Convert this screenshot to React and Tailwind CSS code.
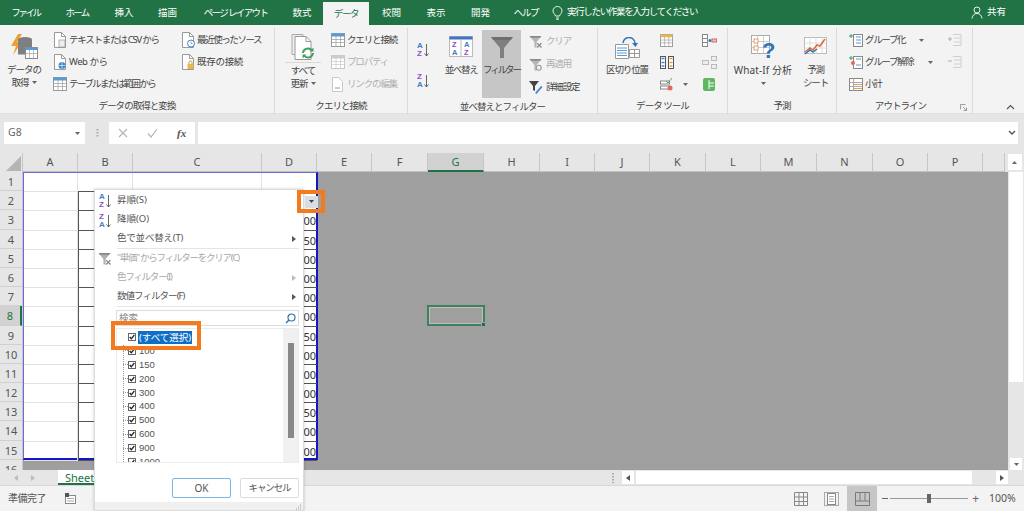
import React from "react";

const Doc = ({ children }) => (
  <svg width="14" height="16" viewBox="0 0 14 16" className="shrink-0">
    <path d="M1.5 .5h7l4 4v11h-11z" fill="#fff" stroke="#9a9a9a" />
    <path d="M8.5 .5v4h4" fill="none" stroke="#9a9a9a" />
    {children}
  </svg>
);
const TableIco = ({ w = 14, h = 14, top = "#5b9bd5", line = "#9a9a9a" }) => (
  <svg width={w} height={h} viewBox="0 0 14 14" className="shrink-0">
    <rect x=".5" y=".5" width="13" height="13" fill="#fff" stroke={line} />
    <rect x=".5" y=".5" width="13" height="3" fill={top} />
    <path d="M.5 6.5h13M.5 9.5h13M5 3v11M9.5 3v11" stroke={line} strokeWidth=".7" />
  </svg>
);
const SortIco = ({ a = "A", b = "Z", c1 = "#3f7fc4", c2 = "#8a4fbf" }) => (
  <svg width="12" height="18" viewBox="0 0 12 18" className="shrink-0">
    <text x="0" y="8" fontSize="8" fontWeight="700" fontFamily="Liberation Sans" fill={c1}>{a}</text>
    <text x="0" y="16" fontSize="8" fontWeight="700" fontFamily="Liberation Sans" fill={c2}>{b}</text>
    <path d="M9.5 4v12M7.5 13.500l2 2.500 2-2.500" fill="none" stroke="#555" strokeWidth=".9" />
  </svg>
);
const Funnel = ({ w = 14, h = 14, fill = "#7f7f7f", extra }) => (
  <svg width={w} height={h} viewBox="0 0 24 24" className="shrink-0">
    <path d="M1 2h22L14 13v10h-4V13z" fill={fill} />
    <path d="M1 2h22l-2 3H3z" fill="#606060" opacity=".5" />
    {extra}
  </svg>
);
const Caret = ({ c = "#666" }) => (
  <svg width="5" height="3" viewBox="0 0 5 3" className="shrink-0"><path d="M0 0h5L2.5 3z" fill={c} /></svg>
);
const ArrowR = ({ c = "#555" }) => (
  <svg width="4" height="6" viewBox="0 0 4 6"><path d="M0 0l4 3-4 3z" fill={c} /></svg>
);
const Chk = () => (
  <span className="w-[8px] h-[8px] border border-[#666] bg-white flex items-center justify-center shrink-0">
    <svg width="6" height="6" viewBox="0 0 6 6"><path d="M.7 3l1.600 1.800L5.300 1" fill="none" stroke="#222" strokeWidth="1.300" /></svg>
  </span>
);
const Small = ({ icon, children, cls = "" }) => (
  <div className={"h-[22px] flex items-center gap-[2px] whitespace-nowrap " + cls}>
    <span className="w-[15px] flex justify-center shrink-0">{icon}</span>
    <span>{children}</span>
  </div>
);
const Group = ({ cls, label, children }) => (
  <div className={"flex flex-col shrink-0 border-r border-[#dadada] my-[3px] -mb-[1px] " + cls}>
    <div className="h-[70px] flex">{children}</div>
    <div className="h-[17px] leading-[18px] text-center tracking-[-0.1em]">{label}</div>
  </div>
);

const tabs = [
  ["ファイル", "w-[51px]", "tracking-[-0.25em]"],
  ["ホーム", "w-[52px]", "tracking-[-0.18em]"],
  ["挿入", "w-[42px]", ""],
  ["描画", "w-[45px]", ""],
  ["ページ レイアウト", "w-[91px]", "tracking-[-0.17em]"],
  ["数式", "w-[42px]", ""],
];
const tabs2 = [
  ["校閲", "w-[45px]"],
  ["表示", "w-[44px]"],
  ["開発", "w-[45px]"],
  ["ヘルプ", "w-[46px] tracking-[-0.14em]"],
];
const cols = [
  ["A", "w-[55px]"], ["B", "w-[55px]"], ["C", "w-[129px]"], ["D", "w-[55px]"], ["E", "w-[55px]"], ["F", "w-[56px]"],
  ["G", "w-[56px]"], ["H", "w-[56px]"], ["I", "w-[55px]"], ["J", "w-[55px]"], ["K", "w-[56px]"], ["L", "w-[55px]"],
  ["M", "w-[56px]"], ["N", "w-[56px]"], ["O", "w-[55px]"], ["P", "w-[55px]"], ["", "w-[22px]"],
];
const rows = Array.from({ length: 16 }, (_, i) => i + 1);
const dvals = ["", "", "00", "50", "00", "00", "00", "00", "50", "00", "00", "00", "50", "00", "00"];
const items = ["100", "150", "200", "300", "400", "500", "600", "900", "1000"];

export default function App() {
  return (
    <div className="relative w-[1024px] h-[511px] overflow-hidden flex flex-col bg-[#f3f3f3] text-[#444] text-[9.5px] font-['Noto_Sans','Noto_Sans_CJK_JP',sans-serif]">
      {/* title tabs */}
      <div className="h-[25px] shrink-0 bg-[#217346] flex text-white items-end">
        {tabs.map(([t, w, tr]) => (
          <div key={t} className={"h-[25px] leading-[25px] text-center whitespace-nowrap " + w + " " + tr}>{t}</div>
        ))}
        <div className="w-[46px] h-[23px] leading-[23px] text-center bg-[#f3f3f3] text-[#217346] tracking-[-0.14em]">データ</div>
        {tabs2.map(([t, w]) => (
          <div key={t} className={"h-[25px] leading-[25px] text-center " + w}>{t}</div>
        ))}
        <div className="h-[25px] flex items-center ml-[3px] gap-[4px] tracking-[-0.14em] whitespace-nowrap">
          <svg width="11" height="14" viewBox="0 0 11 14"><path d="M3.500 10C3 8 1 7.200 1 5a4.500 4.500 0 019 0c0 2.200-2 3-2.500 5zM4 12h3M4.500 13.500h2" fill="none" stroke="#fff" strokeWidth=".9" /></svg>
          <span>実行したい作業を入力してください</span>
        </div>
        <div className="ml-auto mr-[18px] h-[25px] flex items-center gap-[4px]">
          <svg width="12" height="13" viewBox="0 0 12 13"><circle cx="6" cy="4" r="3" fill="none" stroke="#fff" strokeWidth=".9" /><path d="M1 12.500c.5-3.500 2.500-5 5-5s4.500 1.500 5 5" fill="none" stroke="#fff" strokeWidth=".9" /></svg>
          <span>共有</span>
        </div>
      </div>

      {/* ribbon */}
      <div className="h-[89px] shrink-0 flex bg-[#f3f3f3] border-b border-[#e0e0e0]">
        <Group cls="w-[275px]" label="データの取得と変換">
          <div className="w-[46px] ml-[1px] pt-[5px] flex flex-col items-center leading-[13px] tracking-[-0.1em]">
            <svg width="28" height="28" viewBox="0 0 28 28" className="mb-[2px]">
              <path d="M8 1L1 13h5l-3 9 9-13H7l5-8z" fill="#f0a030" />
              <ellipse cx="15" cy="6.500" rx="7" ry="2.500" fill="#7f7f7f" />
              <path d="M8 6.500v15h14v-15" fill="#7f7f7f" />
              <rect x="15.500" y="14.500" width="12" height="11" fill="#fff" stroke="#8a8a8a" />
              <rect x="15.500" y="14.500" width="12" height="2.500" fill="#5b9bd5" />
              <path d="M15.500 20.500h12M19.500 17v8M23.500 17v8" stroke="#a0a0a0" strokeWidth=".7" />
            </svg>
            <span>データの</span>
            <span className="flex items-center gap-[3px]">取得<Caret /></span>
          </div>
          <div className="w-[128px] ml-[5px] pt-[1px] flex flex-col tracking-[-0.13em]">
            <Small icon={<Doc><rect x="6" y="8" width="6" height="7" fill="#eee" stroke="#999" strokeWidth=".7" /></Doc>}>テキストまたは CSV から</Small>
            <Small icon={<Doc><circle cx="9" cy="11.500" r="3.500" fill="#3f86cf" /><path d="M5.500 11.500h7M9 8v7" stroke="#fff" strokeWidth=".6" /></Doc>}><span className="tracking-[-0.05em]">Web から</span></Small>
            <Small icon={<TableIco />}><span className="tracking-[-0.17em]">テーブルまたは範囲から</span></Small>
          </div>
          <div className="flex-1 pt-[1px] flex flex-col tracking-[-0.15em]">
            <Small icon={<Doc><circle cx="10" cy="11.500" r="3.500" fill="#fff" stroke="#3f86cf" /><path d="M10 9.500v2h1.500" fill="none" stroke="#3f86cf" strokeWidth=".7" /></Doc>}>最近使ったソース</Small>
            <Small icon={<Doc><rect x="6.500" y="10" width="6" height="5" fill="#e8b94a" /><path d="M8 10V8.500a1.500 1.500 0 013 0V10" fill="none" stroke="#c09a30" /></Doc>}><span className="tracking-[-0.03em]">既存の接続</span></Small>
          </div>
        </Group>

        <Group cls="w-[133px]" label="クエリと接続">
          <div className="w-[50px] ml-[3px] pt-[5px] flex flex-col items-center leading-[13px] tracking-[-0.1em]">
            <svg width="28" height="28" viewBox="0 0 28 28">
              <path d="M3 1.500h11v20H3z" fill="#eee" stroke="#aaa" />
              <path d="M6 3.500h11l5 5v18H6z" fill="#fff" stroke="#999" />
              <path d="M17 3.500v5h5" fill="none" stroke="#999" />
              <path d="M14 20a5 5 0 019-2.500M24 20a5 5 0 01-9 2.500" fill="none" stroke="#3f9f5f" strokeWidth="2" />
              <path d="M24.500 14.500v4h-4zM13.500 25.500v-4h4z" fill="#3f9f5f" />
            </svg>
            <span className="h-px w-[36px] bg-[#d8d8d8] my-[1px]" />
            <span>すべて</span>
            <span className="flex items-center gap-[3px]">更新<Caret /></span>
          </div>
          <div className="flex-1 pl-[2px] pt-[1px] flex flex-col tracking-[-0.12em]">
            <Small icon={<TableIco />}>クエリと接続</Small>
            <Small cls="text-[#b0b0b0]" icon={<TableIco top="#ccc" line="#c8c8c8" />}>プロパティ</Small>
            <Small cls="text-[#b0b0b0]" icon={<svg width="13" height="15" viewBox="0 0 13 15"><path d="M1.500.5h6l4 4v10h-10z" fill="#fff" stroke="#c8c8c8" /><path d="M4 11h5" stroke="#bbb" strokeWidth="1.500" /></svg>}>リンクの編集</Small>
          </div>
        </Group>

        <Group cls="w-[190px]" label="並べ替えとフィルター">
          <div className="w-[31px] pl-[9px] pt-[12px] flex flex-col gap-[13px]">
            <SortIco />
            <SortIco a="Z" b="A" c1="#8a4fbf" c2="#3f7fc4" />
          </div>
          <div className="w-[42px] ml-[1px] pt-[8px] flex flex-col items-center tracking-[-0.14em] whitespace-nowrap">
            <svg width="24" height="21" viewBox="0 0 24 21" className="mb-[6px]">
              <rect x=".5" y=".5" width="23" height="20" fill="#fff" stroke="#bbb" />
              <rect x=".5" y=".5" width="23" height="3" fill="#4472c4" />
              <path d="M12 3v18" stroke="#bbb" />
              <text x="3" y="11" fontSize="7.500" fontWeight="700" fontFamily="Liberation Sans" fill="#8a4fbf">Z</text>
              <text x="3" y="19" fontSize="7.500" fontWeight="700" fontFamily="Liberation Sans" fill="#3f7fc4">A</text>
              <text x="15" y="11" fontSize="7.500" fontWeight="700" fontFamily="Liberation Sans" fill="#3f7fc4">A</text>
              <text x="15" y="19" fontSize="7.500" fontWeight="700" fontFamily="Liberation Sans" fill="#8a4fbf">Z</text>
            </svg>
            <span>並べ替え</span>
          </div>
          <div className="w-[39px] h-[68px] mt-[2px] bg-[#c6c6c6] pt-[5px] flex flex-col items-center tracking-[-0.22em] whitespace-nowrap">
            <Funnel w={24} h={24} />
            <span className="mt-[4px]">フィルター</span>
          </div>
          <div className="flex-1 pl-[7px] pt-[2px] flex flex-col gap-[1px] tracking-[-0.12em]">
            <Small cls="text-[#b0b0b0] gap-[3px]" icon={<Funnel w={13} h={13} fill="#b5b5b5" extra={<path d="M15 15l8 8M23 15l-8 8" stroke="#888" strokeWidth="2.500" />} />}>クリア</Small>
            <Small cls="text-[#b0b0b0] gap-[3px]" icon={<Funnel w={13} h={13} fill="#b5b5b5" extra={<circle cx="18" cy="18" r="4.500" fill="#f3f3f3" stroke="#999" strokeWidth="2" />} />}>再適用</Small>
            <Small cls="gap-[3px]" icon={
              <svg width="14" height="14" viewBox="0 0 14 14"><path d="M0 1h10L6 6v5L4 10V6z" fill="#444" /><path d="M6 13l6-7 1.500 1-6 7z" fill="#3f86cf" /></svg>
            }>詳細設定</Small>
          </div>
        </Group>

        <Group cls="w-[130px]" label="データ ツール">
          <div className="w-[48px] ml-[5px] pt-[9px] flex flex-col items-center tracking-[-0.12em] whitespace-nowrap">
            <svg width="26" height="23" viewBox="0 0 26 23" className="mb-[3px]">
              <path d="M1.500 7.500h13v14h-13z" fill="#fff" stroke="#999" />
              <path d="M3 11h10M3 13.500h10M3 16h10M3 18.500h10" stroke="#5b9bd5" />
              <path d="M15.500 12.500h10v8h-10z" fill="#fff" stroke="#999" />
              <path d="M15.500 16.500h10M20.500 12.500v8" stroke="#999" />
              <path d="M9 6a6 6 0 0112 1" fill="none" stroke="#2f75b5" strokeWidth="1.500" />
              <path d="M18 6l3.500 4L24 6z" fill="#2f75b5" />
            </svg>
            <span>区切り位置</span>
          </div>
          <div className="w-[41px] ml-[9px] pt-[1px] flex flex-col">
            <div className="h-[22px] flex items-center"><TableIco w={13} h={13} top="#e8b94a" /></div>
            <div className="h-[22px] flex items-center"><svg width="14" height="13" viewBox="0 0 14 13"><rect x=".5" y=".5" width="5" height="12" fill="#fff" stroke="#555" /><rect x="8.500" y=".5" width="5" height="12" fill="#fff" stroke="#555" /><path d="M1.500 2.500h3M1.500 6.500h3M1.500 10h3" stroke="#3f86cf" strokeWidth="1.500" /><path d="M9.500 2.500h3M9.500 6.500h3M9.500 10h3" stroke="#e8a030" strokeWidth="1.500" /></svg></div>
            <div className="h-[23px] flex items-center gap-[10px]"><svg width="13" height="13" viewBox="0 0 13 13"><rect x=".5" y="3" width="9" height="3" fill="#fff" stroke="#888" /><rect x=".5" y="8" width="9" height="3" fill="#fff" stroke="#888" /><path d="M6 3L8 5l4-5" fill="none" stroke="#5aa85a" /><circle cx="10" cy="10" r="2.500" fill="#e06a5a" /></svg><Caret /></div>
          </div>
          <div className="flex-1 ml-[1px] pt-[1px] flex flex-col">
            <div className="h-[22px] flex items-center"><svg width="15" height="13" viewBox="0 0 15 13"><rect x=".5" y=".5" width="5" height="12" fill="#fff" stroke="#888" /><path d="M.5 4.500h5M.5 8.500h5" stroke="#888" /><circle cx="8" cy="6.500" r="1.500" fill="#2f75b5" /><rect x="10" y="5" width="4.500" height="3" fill="#f3c0c0" stroke="#d06a6a" /></svg></div>
            <div className="h-[22px] flex items-center"><svg width="15" height="13" viewBox="0 0 15 13"><rect x=".5" y="4.500" width="6" height="4" fill="#eee" stroke="#bbb" /><rect x="9.500" y=".5" width="5" height="4" fill="#eee" stroke="#bbb" /><rect x="9.500" y="8.500" width="5" height="4" fill="#eee" stroke="#bbb" /></svg></div>
            <div className="h-[22px] flex items-center"><svg width="14" height="14" viewBox="0 0 14 14"><path d="M3 1h8a2 2 0 012 2v9a2 2 0 01-2 2H3a2 2 0 01-2-2V3a2 2 0 012-2z" fill="#5fb85f" /><path d="M7 3v9M7 6h5M7 9h5" stroke="#fff" /></svg></div>
          </div>
        </Group>

        <Group cls="w-[109px]" label="予測">
          <div className="w-[60px] ml-[5px] pt-[7px] flex flex-col items-center whitespace-nowrap">
            <svg width="24" height="24" viewBox="0 0 24 24" className="mb-[4px]">
              <rect x=".5" y=".5" width="18" height="18" fill="#fff" stroke="#aaa" />
              <path d="M6.500 .5v18M12.500 .5v18M.5 6.500h18M.5 12.500h18" stroke="#ccc" />
              <rect x="3" y="4" width="4" height="4" fill="#fff" stroke="#e8a070" />
              <rect x="3" y="11" width="4" height="4" fill="#fff" stroke="#e8a070" />
              <text x="11" y="23" fontSize="22" fontWeight="700" fontFamily="Liberation Sans" fill="#2f75b5">?</text>
            </svg>
            <span className="leading-[14px] text-[10px] tracking-[0.01em]">What-If 分析</span>
            <span className="h-[12px] flex items-center"><Caret /></span>
          </div>
          <div className="w-[33px] ml-[6px] pt-[9px] flex flex-col items-center leading-[13px] tracking-[-0.12em] whitespace-nowrap">
            <svg width="23" height="20" viewBox="0 0 23 20" className="mb-[6px]">
              <rect x=".5" y=".5" width="22" height="16" fill="#fff" stroke="#bbb" />
              <path d="M6 .5v16M12 .5v16M18 .5v16M.5 6h22M.5 11h22" stroke="#ddd" />
              <path d="M1 15l5-4 3 2 4-5 3 1 5-7" fill="none" stroke="#e06a3a" strokeWidth="1.500" />
              <path d="M1 17l5-4 3 2 4-3" fill="none" stroke="#2f75b5" strokeWidth="1.500" />
            </svg>
            <span>予測</span>
            <span>シート</span>
          </div>
        </Group>

        <Group cls="w-[136px]" label={<span className="relative block pr-[8px]">アウトライン<svg width="7" height="7" viewBox="0 0 7 7" className="absolute right-[5px] top-[7px]"><path d="M.5 .5h5M.5 .5v5M6.500 6.500L3 3M6.500 3.500v3h-3" fill="none" stroke="#888" strokeWidth=".8" /></svg></span>}>
          <div className="w-[97px] ml-[11px] pt-[1px] flex flex-col tracking-[-0.14em]">
            <Small cls="gap-[1px]" icon={<svg width="14" height="13" viewBox="0 0 14 13"><path d="M0 2h4M2 0v4" stroke="#3f9f5f" /><rect x="4.500" y=".5" width="9" height="12" fill="#fff" stroke="#888" /><path d="M7 3h5M7 6h5M7 9h5" stroke="#5b9bd5" /></svg>}>
              <span className="flex items-center"><span className="w-[44px]">グループ化</span><span className="ml-[10px]"><Caret /></span></span>
            </Small>
            <Small cls="gap-[1px]" icon={<svg width="14" height="13" viewBox="0 0 14 13"><path d="M0 2h4M2 0v4" stroke="#3f9f5f" /><rect x="4.500" y=".5" width="9" height="12" fill="#fff" stroke="#888" /><path d="M7 3h5M7 9h5" stroke="#5b9bd5" /><circle cx="4" cy="7" r="2" fill="#e06a5a" /></svg>}>
              <span className="flex items-center"><span className="w-[53px]">グループ解除</span><span className="ml-[10px]"><Caret /></span></span>
            </Small>
            <Small cls="gap-[1px]" icon={<svg width="14" height="13" viewBox="0 0 14 13"><rect x=".5" y=".5" width="13" height="12" fill="#fff" stroke="#888" /><path d="M.5 4.500h13M.5 8.500h13M4.500 .5v12" stroke="#aaa" /><path d="M5 6.500h8M5 10.500h8" stroke="#e8a060" /></svg>}>小計</Small>
          </div>
          <div className="flex-1 pt-[6px] pl-[3px] flex flex-col gap-[10px]">
            {[0, 1].map((k) => (
              <svg key={k} width="14" height="12" viewBox="0 0 14 12"><path d={k ? "M0 5h4" : "M0 5h4M2 3v4"} stroke="#b0b0b0" /><path d="M5 .5h8v11H5M6 4h7M6 8h7" fill="none" stroke="#d0d0d0" /></svg>
            ))}
          </div>
        </Group>
        <div className="flex-1 flex items-end justify-end pb-[3px] pr-[9px]">
          <svg width="9" height="6" viewBox="0 0 9 6"><path d="M1 5l3.500-3.500L8 5" fill="none" stroke="#555" strokeWidth="1.200" /></svg>
        </div>
      </div>

      {/* formula bar */}
      <div className="h-[39px] shrink-0 bg-[#e6e6e6] pt-[8px] pl-[4px] pr-[6px] flex">
        <div className="w-[81px] h-[22px] bg-white flex items-center justify-between pl-[4px] pr-[5px] text-[10.5px] text-[#666]">
          <span>G8</span><Caret />
        </div>
        <div className="w-[24px] h-[22px] flex justify-center items-center text-[#aaa]">
          <svg width="3" height="11" viewBox="0 0 3 11"><path d="M1.500 1v9" stroke="#aaa" strokeWidth="2" strokeDasharray="1.500 1.500" /></svg>
        </div>
        <div className="w-[86px] h-[22px] bg-white flex items-center pl-[9px] gap-[19px] shrink-0">
          <svg width="10" height="10" viewBox="0 0 10 10"><path d="M1 1l8 8M9 1L1 9" stroke="#b5b5b5" strokeWidth="1.200" /></svg>
          <svg width="11" height="10" viewBox="0 0 11 10"><path d="M1 5.500L4 9l6-8" fill="none" stroke="#b5b5b5" strokeWidth="1.200" /></svg>
          <span className="font-['Liberation_Serif',serif] italic text-[11px] font-bold text-[#555]">fx</span>
        </div>
        <div className="flex-1 ml-[3px] h-[22px] bg-white flex items-center justify-end pr-[2px]">
          <svg width="8" height="6" viewBox="0 0 8 6"><path d="M1 1l3 3 3-3" fill="none" stroke="#555" strokeWidth="1.400" /></svg>
        </div>
      </div>

      {/* column headers */}
      <div className="h-[19px] shrink-0 flex bg-[#e6e6e6] text-[11px] text-[#555]">
        <div className="w-[23px] shrink-0 flex items-end justify-end pr-[1px] pb-[1px] border-r border-[#c6c6c6]">
          <svg width="15" height="15" viewBox="0 0 15 15"><path d="M15 0v15H0z" fill="#b5b5b5" /></svg>
        </div>
        {cols.map(([c, w]) => (
          <div key={c} className={"shrink-0 text-center leading-[18px] border-r border-[#c6c6c6] " + w + (c === "G" ? " bg-[#d2d2d2] border-b-2 border-b-[#217346] text-[#217346]" : " border-b border-b-[#c0c0c0]")}>{c}</div>
        ))}
        <div className="flex-1 flex justify-center items-start pt-[1px] bg-[#e6e6e6]">
          <div className="w-[14px] h-[16px] bg-white flex items-center justify-center"><span className="rotate-180 flex"><Caret /></span></div>
        </div>
      </div>

      {/* sheet */}
      <div className="h-[298px] shrink-0 flex">
        <div className="w-[23px] shrink-0 bg-[#e6e6e6] overflow-hidden border-r border-[#c6c6c6] text-[11px] text-[#555]">
          {rows.map((r) => (
            <div key={r} className={"h-[19.2px] leading-[19px] text-center border-b border-[#d0d0d0] " + (r === 8 ? "bg-[#d2d2d2] border-r-2 border-r-[#217346] text-[#217346]" : "")}>{r}</div>
          ))}
        </div>
        <div className="relative flex-1 bg-[#9f9f9f] overflow-hidden">
          <div className="w-[295px] h-[288px] bg-white border-t border-l border-[#6a6ad8] border-r-2 border-r-[#1414c8] border-b-2 border-b-[#1414c8] grid grid-cols-[54px_55px_129px_55px] grid-rows-[repeat(15,19.2px)] box-border">
            {dvals.flatMap((v, i) => [
              <div key={"a" + i} className="border-r border-b border-[#e2e2e2]" />,
              <div key={"b" + i} className={i === 0 ? "border-r border-b border-[#e2e2e2] border-b-[#555]" : "border-l border-r border-b border-[#555]"} />,
              <div key={"c" + i} className={i === 0 ? "border-r border-b border-[#e2e2e2] border-b-[#555]" : "border-r border-b border-[#555]"} />,
              <div key={"d" + i} className={"text-right pr-[1px] text-[11px] text-[#333] leading-[19px] " + (i === 0 ? "" : "border-b border-[#555]")}>{v}</div>,
            ])}
          </div>
          <div className="absolute left-[404px] top-[133px] w-[58px] h-[21px] border-2 border-[#3f8060]">
            <div className="w-full h-full border border-[#bdbdbd]" />
            <div className="absolute -right-[3px] -bottom-[3px] w-[5px] h-[5px] bg-[#1e7145] border border-[#9f9f9f]" />
          </div>
        </div>
        <div className="w-[16px] shrink-0 bg-[#e6e6e6] flex flex-col items-center">
          <div className="w-[14px] h-[210px] bg-white" />
          <div className="mt-auto w-[12px] h-[12px] bg-white flex items-center justify-center"><Caret /></div>
        </div>
      </div>

      {/* sheet tabs */}
      <div className="h-[16px] shrink-0 bg-[#e6e6e6] flex border-b border-[#d8d8d8]">
        <div className="w-[58px] flex items-center pl-[14px] gap-[13px] shrink-0">
          <svg width="4" height="6" viewBox="0 0 4 6"><path d="M4 0L0 3l4 3z" fill="#bbb" /></svg>
          <ArrowR c="#bbb" />
        </div>
        <div className="w-[60px] h-[15px] bg-white text-[#217346] text-[11px] leading-[15px] pl-[7px] border-b-2 border-b-[#217346] overflow-hidden shrink-0">Sheet1</div>
        <div className="ml-[492px] w-[6px] flex justify-center items-center">
          <svg width="2" height="10" viewBox="0 0 2 10"><path d="M1 0v10" stroke="#aaa" strokeWidth="2" strokeDasharray="1.500 1.500" /></svg>
        </div>
        <div className="ml-[6px] w-[12px] h-[13px] mt-[1px] bg-white flex items-center justify-center">
          <svg width="4" height="6" viewBox="0 0 4 6"><path d="M4 0L0 3l4 3z" fill="#555" /></svg>
        </div>
        <div className="ml-[2px] w-[336px] h-[13px] mt-[1px] bg-white" />
        <div className="ml-[24px] w-[12px] h-[13px] mt-[1px] bg-white flex items-center justify-center"><ArrowR /></div>
      </div>

      {/* status bar */}
      <div className="flex-1 bg-[#f3f3f3] flex items-center text-[10px] text-[#555]">
        <span className="ml-[8px] w-[57px] tracking-[-0.05em]">準備完了</span>
        <svg width="11" height="11" viewBox="0 0 11 11"><rect x=".5" y="2.500" width="10" height="8" fill="#fff" stroke="#888" /><rect x="0" y="0" width="4" height="4" fill="#555" /><path d="M2 5.500h7M2 8h7" stroke="#aaa" /></svg>
        <div className="ml-auto flex items-center h-full">
          <svg width="14" height="14" viewBox="0 0 14 14" className="mr-[16px]"><path d="M.5.5h13v13H.5zM5 .5v13M9.500 .5v13M.5 5h13M.5 9.500h13" fill="none" stroke="#888" /></svg>
          <svg width="15" height="14" viewBox="0 0 15 14" className="mr-[8px]"><rect x=".5" y=".5" width="14" height="13" fill="none" stroke="#aaa" /><rect x="3.500" y="1.500" width="8" height="11" fill="#fff" stroke="#888" /><path d="M5 4.500h5M5 7h5M5 9.500h5" stroke="#aaa" /></svg>
          <div className="w-[30px] h-full bg-[#c6c6c6] flex items-center justify-center">
            <svg width="15" height="14" viewBox="0 0 15 14"><path d="M.5.500h14v13H.5zM.5 9h14M5 .500V9M10 .500V9" fill="none" stroke="#7a7a7a" /></svg>
          </div>
          <span className="ml-[5px] w-[6px] h-[1.500px] bg-[#666]" />
          <div className="relative ml-[2px] w-[78px] h-px bg-[#999]">
            <div className="absolute left-[37px] -top-[4px] w-[4px] h-[9px] bg-[#666]" />
          </div>
          <span className="ml-[4px] text-[12px] text-[#666] leading-none">+</span>
          <span className="ml-[10px] mr-[8px] w-[27px] text-[10.5px]">100%</span>
        </div>
      </div>

      {/* filter dropdown */}
      <div className="absolute left-[94px] top-[189px] w-[210px] h-[322px] bg-white border border-[#dcdcdc] shadow-[0_0_3px_rgba(0,0,0,0.2)] flex flex-col text-[#555]">
        <div className="flex flex-col">
          <div className="h-[20px] flex items-center pl-[4px]"><SortIco /><span className="ml-[6px]">昇順(S)</span></div>
          <div className="h-[19px] flex items-center pl-[4px]"><SortIco a="Z" b="A" c1="#8a4fbf" c2="#3f7fc4" /><span className="ml-[6px]">降順(O)</span></div>
          <div className="h-[19px] flex items-center pl-[22px] pr-[7px] justify-between"><span className="tracking-[-0.02em]">色で並べ替え(T)</span><ArrowR /></div>
          <div className="h-px bg-[#e4e4e4] ml-[22px] mr-[4px]" />
          <div className="h-[19px] flex items-center pl-[3px] text-[#a8a8a8]"><Funnel w={13} h={13} fill="#b0b0b0" extra={<path d="M15 15l8 8M23 15l-8 8" stroke="#888" strokeWidth="2.500" />} /><span className="ml-[6px] tracking-[-0.13em]">"単価" からフィルターをクリア(C)</span></div>
          <div className="h-[19px] flex items-center pl-[22px] pr-[7px] justify-between text-[#a8a8a8]"><span className="tracking-[-0.13em]">色フィルター(I)</span><ArrowR c="#bbb" /></div>
          <div className="h-[19px] flex items-center pl-[22px] pr-[7px] justify-between"><span className="tracking-[-0.1em]">数値フィルター(F)</span><ArrowR /></div>
          <div className="h-px bg-[#e4e4e4] ml-[22px] mr-[4px]" />
        </div>
        <div className="ml-[21px] mr-[4px] mt-[3px] h-[16px] shrink-0 border border-[#dcdcdc] flex items-center justify-between px-[2px] text-[#888]">
          <span>検索</span>
          <svg width="11" height="11" viewBox="0 0 11 11"><circle cx="6.500" cy="4.500" r="3.500" fill="none" stroke="#2f75b5" strokeWidth="1.200" /><path d="M4 7L1 10" stroke="#2f75b5" strokeWidth="1.500" /></svg>
        </div>
        <div className="ml-[21px] mr-[4px] mt-[2px] h-[135px] shrink-0 border border-[#ececec] flex overflow-hidden">
          <div className="flex-1 pl-[6px] pt-[1px] relative text-[#555]">
            <div className="absolute left-[6px] top-[16px] bottom-0 border-l border-dotted border-[#999]" />
            <div className="h-[14px] flex items-center pl-[5px] gap-[1px]">
              <Chk />
              <span className="bg-[#0f6fc6] text-white leading-[13px] px-[1px] ml-[1px] whitespace-nowrap">(すべて選択)</span>
            </div>
            {items.map((t) => (
              <div key={t} className="h-[13.900px] flex items-center">
                <span className="w-[5px] border-t border-dotted border-[#999]" />
                <Chk />
                <span className="ml-[3px] font-['Liberation_Sans',sans-serif]">{t}</span>
              </div>
            ))}
          </div>
          <div className="w-[15px] bg-[#f0f0f0] pt-[14px] flex justify-center shrink-0">
            <div className="w-[6px] h-[95px] bg-[#888]" />
          </div>
        </div>
        <div className="flex justify-end gap-[9px] mr-[4px] mt-[15px]">
          <div className="w-[59px] h-[20px] border border-[#7ab6e6] rounded-[2px] bg-white flex items-center justify-center text-[10px]">OK</div>
          <div className="w-[59px] h-[20px] border border-[#dcdcdc] rounded-[2px] bg-white flex items-center justify-center tracking-[-0.12em]">キャンセル</div>
        </div>
        <div className="mt-auto h-[8px] bg-[#f0f0f0] flex justify-end items-end pr-[1px]">
          <svg width="6" height="6" viewBox="0 0 6 6"><path d="M4 1h1M2 3h1M4 3h1M0 5h1M2 5h1M4 5h1" stroke="#aaa" /></svg>
        </div>
      </div>

      {/* callouts */}
      <div className="absolute left-[297px] top-[190px] w-[28px] h-[23px] border-4 border-[#f47a20] flex items-center justify-center">
        <div className="w-[13px] h-[12px] bg-[#d9dee4] flex items-center justify-center"><Caret c="#444" /></div>
      </div>
      <div className="absolute left-[111px] top-[321px] w-[90px] h-[29px] border-4 border-[#f47a20]" />
    </div>
  );
}
